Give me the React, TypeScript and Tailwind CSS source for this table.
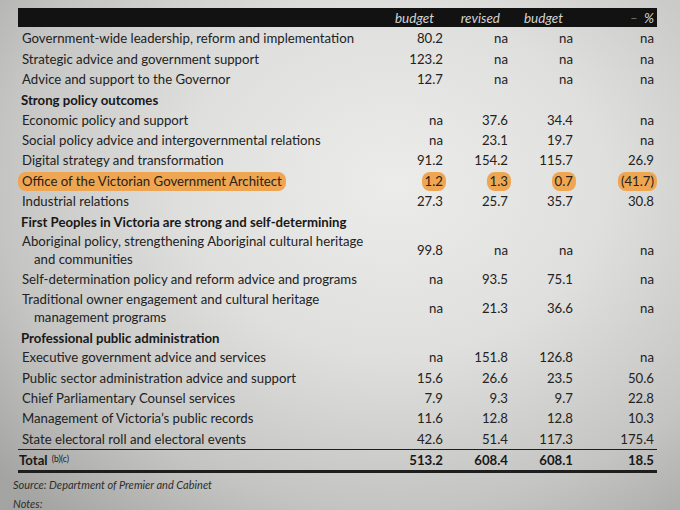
type Row =
  | { kind: "section"; label: string }
  | { kind: "item"; lines: string[]; v: string[]; hi?: boolean };

const rows: Row[] = [
  { kind: "item", lines: ["Government-wide leadership, reform and implementation"], v: ["80.2", "na", "na", "na"] },
  { kind: "item", lines: ["Strategic advice and government support"], v: ["123.2", "na", "na", "na"] },
  { kind: "item", lines: ["Advice and support to the Governor"], v: ["12.7", "na", "na", "na"] },
  { kind: "section", label: "Strong policy outcomes" },
  { kind: "item", lines: ["Economic policy and support"], v: ["na", "37.6", "34.4", "na"] },
  { kind: "item", lines: ["Social policy advice and intergovernmental relations"], v: ["na", "23.1", "19.7", "na"] },
  { kind: "item", lines: ["Digital strategy and transformation"], v: ["91.2", "154.2", "115.7", "26.9"] },
  { kind: "item", lines: ["Office of the Victorian Government Architect"], v: ["1.2", "1.3", "0.7", "(41.7)"], hi: true },
  { kind: "item", lines: ["Industrial relations"], v: ["27.3", "25.7", "35.7", "30.8"] },
  { kind: "section", label: "First Peoples in Victoria are strong and self-determining" },
  {
    kind: "item",
    lines: ["Aboriginal policy, strengthening Aboriginal cultural heritage", "and communities"],
    v: ["99.8", "na", "na", "na"],
  },
  { kind: "item", lines: ["Self-determination policy and reform advice and programs"], v: ["na", "93.5", "75.1", "na"] },
  {
    kind: "item",
    lines: ["Traditional owner engagement and cultural heritage", "management programs"],
    v: ["na", "21.3", "36.6", "na"],
  },
  { kind: "section", label: "Professional public administration" },
  { kind: "item", lines: ["Executive government advice and services"], v: ["na", "151.8", "126.8", "na"] },
  { kind: "item", lines: ["Public sector administration advice and support"], v: ["15.6", "26.6", "23.5", "50.6"] },
  { kind: "item", lines: ["Chief Parliamentary Counsel services"], v: ["7.9", "9.3", "9.7", "22.8"] },
  { kind: "item", lines: ["Management of Victoria\u2019s public records"], v: ["11.6", "12.8", "12.8", "10.3"] },
  { kind: "item", lines: ["State electoral roll and electoral events"], v: ["42.6", "51.4", "117.3", "175.4"] },
];

const grid = "grid grid-cols-[362px_66px_65px_65px_81px] items-center";

function Cell({ value, hi }: { value: string; hi?: boolean }) {
  return (
    <div className="text-right pr-[3px]">
      {hi ? (
        <span className="inline-block rounded-[8px] bg-[#eea652] px-[3px] -mr-[3px] leading-[19px] text-[#2a2116]">
          {value}
        </span>
      ) : (
        value
      )}
    </div>
  );
}

export default function App() {
  return (
    <div
      className="w-[680px] h-[510px] overflow-hidden text-[#222] bg-[radial-gradient(ellipse_78%_85%_at_58%_36%,#ececea_0%,#dfdfdd_40%,#c4c4c2_75%,#a4a4a2_100%)]"
      style={{ fontFamily: "Lato, 'Open Sans', sans-serif" }}
    >
      <div className="pt-[8px] pl-[18px] w-[657px]">
        <div className={`${grid} h-[19px] bg-[#121212] text-[#d4d4d2] italic text-[13.5px] mb-[2px]`}>
          <div />
          <div className="text-right pr-[12px]">budget</div>
          <div className="text-right pr-[11px]">revised</div>
          <div className="text-right pr-[13px]">budget</div>
          <div className="text-right pr-[3px]">
            <span className="text-[#6a6a6a] mr-[6px]">–</span>%
          </div>
        </div>

        <div className="text-[13.2px]">
          {rows.map((r, i) =>
            r.kind === "section" ? (
              <div key={i} className="h-[20.3px] leading-[20.3px] pl-[3px] font-bold text-[#181818]">
                {r.label}
              </div>
            ) : (
              <div
                key={i}
                className={`${grid} ${r.lines.length > 1 ? "h-[37.7px]" : "h-[20.3px]"} leading-[17.5px]`}
              >
                <div className="pl-[4px]">
                  {r.hi ? (
                    <span className="inline-block -ml-[4px] rounded-[8px] bg-[#eea652] px-[4px] leading-[19px] text-[#2a2116]">
                      {r.lines[0]}
                    </span>
                  ) : (
                    r.lines.map((l, j) => (
                      <div key={j} className={j > 0 ? "pl-[12px]" : ""}>
                        {l}
                      </div>
                    ))
                  )}
                </div>
                {r.v.map((v, j) => (
                  <Cell key={j} value={v} hi={r.hi} />
                ))}
              </div>
            )
          )}

          <div className={`${grid} h-[24px] border-t-[1.5px] border-b-[3px] border-[#1e1e1e] font-bold text-[#181818]`}>
            <div className="pl-[1px]">
              Total<span className="ml-[4px] text-[8.5px] font-normal relative -top-[3px]">(b)(c)</span>
            </div>
            <Cell value="513.2" />
            <Cell value="608.4" />
            <Cell value="608.1" />
            <Cell value="18.5" />
          </div>
        </div>
      </div>

      <div className="pl-[13px] mt-[1.5px] italic text-[11px] text-[#2e2e2e]">
        <div className="h-[19px] leading-[19px]">Source: Department of Premier and Cabinet</div>
        <div className="h-[19px] leading-[19px]">Notes:</div>
      </div>
    </div>
  );
}
